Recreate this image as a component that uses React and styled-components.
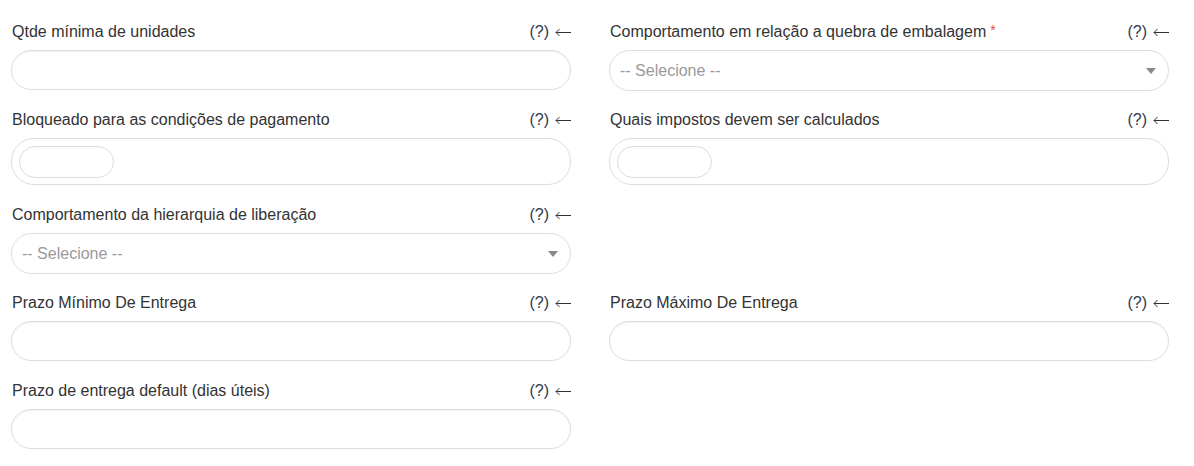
import React from "react";
import styled, { createGlobalStyle } from "styled-components";

const GlobalStyle = createGlobalStyle`
  body {
    margin: 0;
    background: #fff;
    font-family: "Liberation Sans", Arial, sans-serif;
    color: #333;
  }
`;

const Form = styled.div`
  display: grid;
  grid-template-columns: 560px 560px;
  column-gap: 38px;
  padding: 21px 0 0 11px;
`;

const Group = styled.div`
  display: flex;
  flex-direction: column;
  margin-bottom: ${(p) => (p.$short ? "18px" : "19px")};
`;

const LabelRow = styled.div`
  display: flex;
  align-items: center;
  height: 22px;
  margin-bottom: 7px;
  font-size: 16px;
  color: #333;
`;

const LabelText = styled.span`
  padding-left: 1px;
`;

const Required = styled.span`
  color: #d9534f;
  margin-left: 4px;
  font-size: 14px;
  position: relative;
  top: -2px;
`;

const Help = styled.span`
  display: flex;
  align-items: center;
  margin-left: auto;
  color: #2d3a4a;
  white-space: nowrap;
`;

const Arrow = styled.svg`
  margin-left: 6px;
  width: 16px;
  height: 10px;
`;

const Input = styled.input`
  box-sizing: border-box;
  width: 100%;
  height: 40px;
  border: 1px solid #ddd;
  border-radius: 20px;
  box-shadow: inset 0 1px 1px rgba(0, 0, 0, 0.05);
  padding: 0 12px;
  font: inherit;
  outline: none;
`;

const Select = styled.div`
  box-sizing: border-box;
  display: flex;
  align-items: center;
  height: 41px;
  border: 1px solid #ddd;
  border-radius: 21px;
  padding: 0 12px 0 10px;
  font-size: 16px;
  color: #999;
`;

const Caret = styled.span`
  margin-left: auto;
  width: 0;
  height: 0;
  border-left: 5px solid transparent;
  border-right: 5px solid transparent;
  border-top: 6px solid #888;
`;

const Multi = styled.div`
  box-sizing: border-box;
  display: flex;
  align-items: flex-start;
  height: 47px;
  border: 1px solid #ddd;
  border-radius: 23px;
  padding: 7px;
`;

const Search = styled.div`
  box-sizing: border-box;
  width: 95px;
  height: 32px;
  border: 1px solid #ddd;
  border-radius: 16px;
`;

const Empty = styled.div``;

function Field({ label, required, short, children }) {
  return (
    <Group $short={short}>
      <LabelRow>
        <LabelText>
          {label}
          {required && <Required>*</Required>}
        </LabelText>
        <Help>
          (?)
          <Arrow viewBox="0 0 16 10" fill="none" stroke="#333" strokeWidth="1">
            <path d="M1 5.5H16M4.5 2L1 5.5L4.5 9" />
          </Arrow>
        </Help>
      </LabelRow>
      {children}
    </Group>
  );
}

function SelectBox() {
  return (
    <Select>
      -- Selecione --
      <Caret />
    </Select>
  );
}

function MultiBox() {
  return (
    <Multi>
      <Search />
    </Multi>
  );
}

export default function App() {
  return (
    <>
      <GlobalStyle />
      <Form>
        <Field label="Qtde mínima de unidades" short>
          <Input />
        </Field>
        <Field label="Comportamento em relação a quebra de embalagem" required short>
          <SelectBox />
        </Field>
        <Field label="Bloqueado para as condições de pagamento">
          <MultiBox />
        </Field>
        <Field label="Quais impostos devem ser calculados">
          <MultiBox />
        </Field>
        <Field label="Comportamento da hierarquia de liberação" short>
          <SelectBox />
        </Field>
        <Empty />
        <Field label="Prazo Mínimo De Entrega">
          <Input />
        </Field>
        <Field label="Prazo Máximo De Entrega">
          <Input />
        </Field>
        <Field label="Prazo de entrega default (dias úteis)">
          <Input />
        </Field>
      </Form>
    </>
  );
}
